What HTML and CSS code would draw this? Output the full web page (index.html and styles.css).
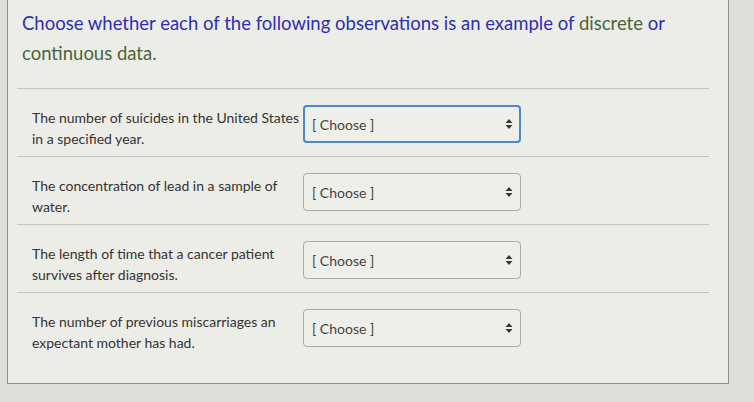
FILE: index.html
```html
<!DOCTYPE html>
<html lang="en">

<head>
  <meta charset="UTF-8">
  <title>Discrete or continuous</title>
  <link rel="stylesheet" href="styles.css">
</head>

<body>
  <div class="panel">
    <p class="question">
      Choose whether each of the following observations is an example of <span class="term">discrete</span> or
      <span class="term">continuous data.</span>
    </p>
    <ul class="rows">
      <li class="row">
        <span class="label">The number of suicides in the United States in a specified year.</span>
        <div class="pick focus">
          <select><option>[ Choose ]</option></select>
          <svg class="arrows" width="8" height="12" viewBox="0 0 8 12"><path d="M4 1L7.5 5H0.5Z M4 11L7.5 7H0.5Z" fill="#3a3a3a"/></svg>
        </div>
      </li>
      <li class="row">
        <span class="label">The concentration of lead in a sample of water.</span>
        <div class="pick">
          <select><option>[ Choose ]</option></select>
          <svg class="arrows" width="8" height="12" viewBox="0 0 8 12"><path d="M4 1L7.5 5H0.5Z M4 11L7.5 7H0.5Z" fill="#3a3a3a"/></svg>
        </div>
      </li>
      <li class="row">
        <span class="label">The length of time that a cancer patient survives after diagnosis.</span>
        <div class="pick">
          <select><option>[ Choose ]</option></select>
          <svg class="arrows" width="8" height="12" viewBox="0 0 8 12"><path d="M4 1L7.5 5H0.5Z M4 11L7.5 7H0.5Z" fill="#3a3a3a"/></svg>
        </div>
      </li>
      <li class="row">
        <span class="label">The number of previous miscarriages an expectant mother has had.</span>
        <div class="pick">
          <select><option>[ Choose ]</option></select>
          <svg class="arrows" width="8" height="12" viewBox="0 0 8 12"><path d="M4 1L7.5 5H0.5Z M4 11L7.5 7H0.5Z" fill="#3a3a3a"/></svg>
        </div>
      </li>
    </ul>
  </div>
</body>

</html>
```

FILE: styles.css
```css
* {
  margin: 0;
  padding: 0;
  box-sizing: border-box;
}

li {
  list-style: none;
}

body {
  background-color: #dfded8;
  font-family: Lato, "Open Sans", sans-serif;
}

.panel {
  margin-left: 7px;
  width: 722px;
  height: 384px;
  background-color: #edede8;
  border: 1px solid #8f8f8a;
  border-top: none;
}

.question {
  padding: 8px 14px 0;
  font-size: 18.5px;
  line-height: 30px;
  color: #2d2fb0;
  margin-bottom: 20px;
}

.question .term {
  color: #47653a;
}

.rows {
  margin: 0 19px 0 9px;
}

.row {
  display: grid;
  grid-template-columns: 271px 218px;
  align-items: start;
  padding: 16px 0 7px 15px;
  border-top: 1px solid #c4c4bf;
}

.label {
  font-size: 14px;
  line-height: 21px;
  color: #333;
  padding-top: 2px;
}

.pick {
  position: relative;
  height: 38px;
}

.pick select {
  -webkit-appearance: none;
  appearance: none;
  width: 100%;
  height: 100%;
  padding: 0 8px;
  font-family: Lato, "Open Sans", sans-serif;
  font-size: 14px;
  color: #444;
  background-color: #efefea;
  border: 1px solid #acaca7;
  border-radius: 4px;
}

.pick.focus select {
  border: 2px solid #4f88c9;
  padding: 0 7px;
}

.arrows {
  position: absolute;
  right: 8px;
  top: 13px;
}
```
